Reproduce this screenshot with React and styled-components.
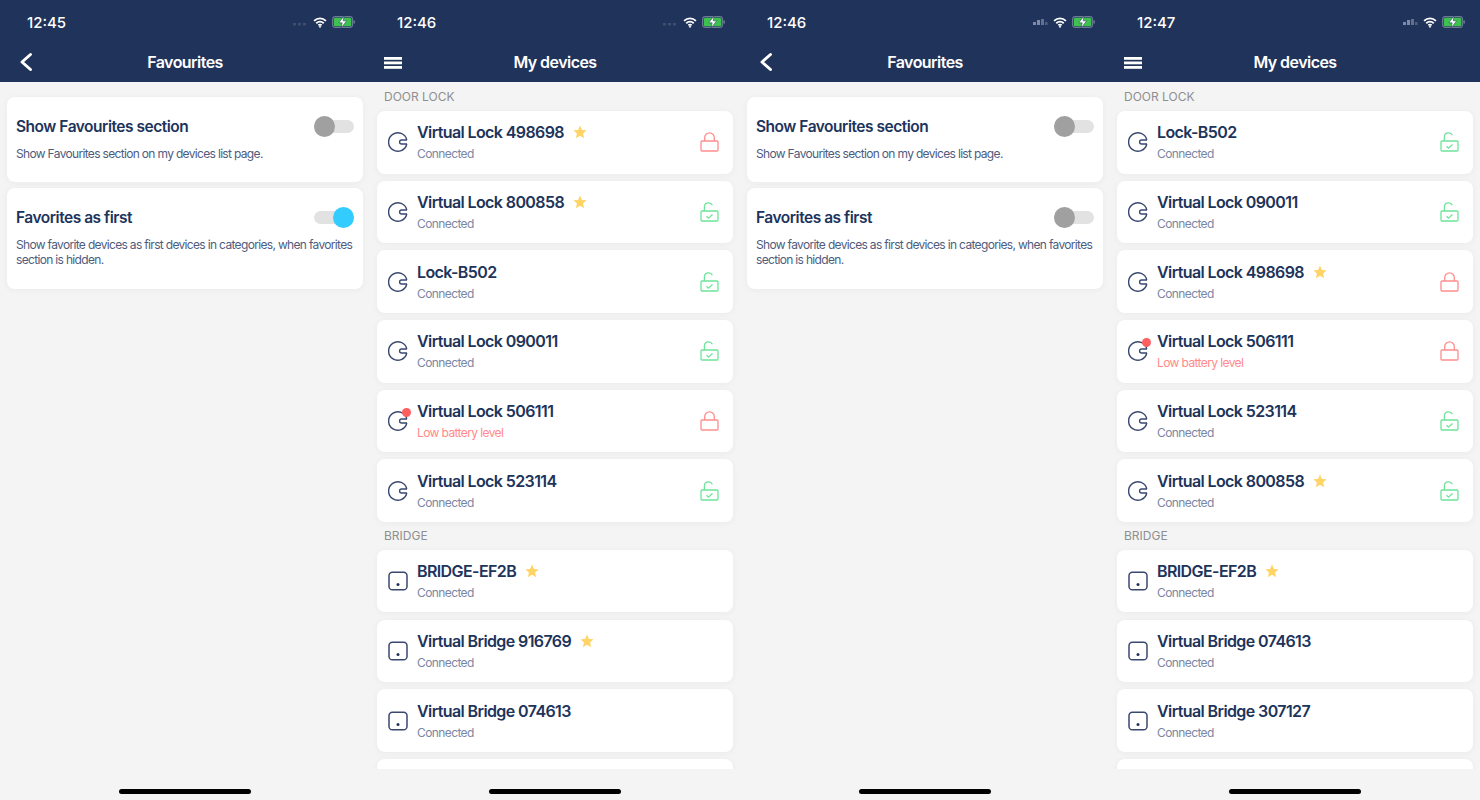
import React from "react";
import styled, { createGlobalStyle } from "styled-components";

const GlobalStyle = createGlobalStyle`
  html, body { margin: 0; padding: 0; background: #f4f4f4; }
  body { font-family: Inter, "Liberation Sans", sans-serif; -webkit-font-smoothing: antialiased; }
`;

const Page = styled.div`
  display: grid;
  grid-template-columns: repeat(4, 370px);
  width: 1480px;
  height: 800px;
  overflow: hidden;
`;

const Phone = styled.div`
  display: flex;
  flex-direction: column;
  height: 800px;
  background: #f4f4f4;
`;

const Top = styled.div`
  height: 82px;
  background: #20335a;
  color: #fff;
  flex: none;
`;

const StatusBar = styled.div`
  display: flex;
  align-items: center;
  justify-content: space-between;
  height: 44px;
  padding: 0 15px 0 27px;
`;

const Time = styled.span`
  font-size: 15px;
  font-weight: 500;
`;

const StatusIcons = styled.div`
  display: flex;
  align-items: center;
  gap: 5px;
`;

const NavBar = styled.div`
  position: relative;
  display: flex;
  align-items: center;
  justify-content: center;
  height: 36px;
`;

const NavIcon = styled.div`
  position: absolute;
  left: ${(p) => p.$left}px;
  top: 8px;
  display: flex;
`;

const Title = styled.div`
  font-size: 16px;
  font-weight: 600;
  letter-spacing: -0.55px;
`;

const Content = styled.div`
  flex: 1;
  min-height: 0;
  overflow: hidden;
  padding: 0 7px;
  display: flex;
  flex-direction: column;
`;

const SettingsCard = styled.div`
  background: #fff;
  border-radius: 8px;
  box-shadow: 0 1px 6px rgba(32, 51, 90, 0.05);
  padding: 15px 9px 0;
  box-sizing: border-box;
  height: ${(p) => p.$height}px;
  margin-top: ${(p) => p.$top}px;
  flex: none;
`;

const SettingsHead = styled.div`
  display: flex;
  align-items: center;
  justify-content: space-between;
  height: 28px;
`;

const SettingsTitle = styled.div`
  font-size: 15.5px;
  font-weight: 600;
  letter-spacing: -0.48px;
  color: #20335a;
`;

const SettingsText = styled.div`
  font-size: 12px;
  line-height: 15px;
  letter-spacing: -0.67px;
  color: #4e5c7d;
  margin-top: 6px;
`;

const Toggle = styled.div`
  position: relative;
  width: 40px;
  height: 13px;
  border-radius: 7px;
  background: #e2e2e2;
`;

const Knob = styled.div`
  position: absolute;
  top: -4px;
  ${(p) => (p.$on ? "right: 0;" : "left: 0;")}
  width: 21px;
  height: 21px;
  border-radius: 50%;
  background: ${(p) => (p.$on ? "#32ccff" : "#a0a0a0")};
`;

const SectionLabel = styled.div`
  flex: none;
  height: ${(p) => p.$height}px;
  padding: ${(p) => p.$pad}px 0 0 7px;
  box-sizing: border-box;
  font-size: 12px;
  line-height: 14px;
  color: #8f8f8f;
`;

const List = styled.div`
  display: flex;
  flex-direction: column;
  gap: 7.2px;
`;

const Device = styled.div`
  flex: none;
  height: 62.5px;
  background: #fff;
  border-radius: 8px;
  box-shadow: 0 1px 6px rgba(32, 51, 90, 0.05);
  display: flex;
  align-items: center;
  padding: 0 14px 0 11px;
`;

const DeviceIcon = styled.div`
  position: relative;
  width: 20px;
  height: 20px;
  margin-right: 9px;
  display: flex;
`;

const Alert = styled.span`
  position: absolute;
  top: -3px;
  right: -3px;
  width: 9px;
  height: 9px;
  border-radius: 50%;
  background: #ff5f5f;
`;

const DeviceInfo = styled.div`
  flex: 1;
  display: flex;
  flex-direction: column;
  gap: 4px;
  margin-top: -1px;
`;

const NameRow = styled.div`
  display: flex;
  align-items: center;
  gap: 9px;
  height: 20px;
`;

const Name = styled.div`
  font-size: 16px;
  font-weight: 600;
  letter-spacing: -0.6px;
  color: #20335a;
`;

const Sub = styled.div`
  font-size: 12px;
  line-height: 15px;
  letter-spacing: -0.6px;
  color: ${(p) => (p.$low ? "#ff8a8a" : "#7b86a3")};
`;

const Foot = styled.div`
  flex: none;
  height: 31px;
  display: flex;
  justify-content: center;
  padding-top: 20px;
  box-sizing: border-box;
`;

const HomeBar = styled.div`
  width: 132px;
  height: 5px;
  border-radius: 3px;
  background: #000;
`;

const Signal = ({ strong }) => (
  <svg width="16" height="8" viewBox="0 0 16 8">
    {strong ? (
      <g fill="#7f8ba5">
        <rect x="1" y="4" width="3" height="3" />
        <rect x="5" y="2" width="3" height="5" />
        <rect x="9" y="1" width="3" height="6" opacity=".7" />
        <rect x="13" y="4" width="2.5" height="3" opacity=".5" />
      </g>
    ) : (
      <g fill="#3f4d6e">
        <rect x="1" y="5" width="3" height="2.5" />
        <rect x="6" y="5" width="3" height="2.5" />
        <rect x="11" y="5" width="3" height="2.5" />
      </g>
    )}
  </svg>
);

const Wifi = () => (
  <svg width="14" height="11" viewBox="0 0 15 12" fill="none" stroke="#fff" strokeWidth="1.9">
    <path d="M1 4.2C4.8.6 10.2.6 14 4.2" />
    <path d="M3.4 6.8c2.4-2.2 5.8-2.2 8.2 0" />
    <path d="M5.7 9c1.1-.9 2.5-.9 3.6 0" />
    <circle cx="7.5" cy="10.6" r=".7" fill="#fff" strokeWidth="1" />
  </svg>
);

const Battery = () => (
  <svg width="23" height="12" viewBox="0 0 23 12">
    <rect x=".6" y=".6" width="20" height="10.8" rx="2.8" fill="none" stroke="#6b7a96" strokeWidth="1.1" />
    <rect x="1.8" y="1.8" width="17.6" height="8.4" rx="1.5" fill="#3ec24f" />
    <rect x="21.4" y="4.2" width="1.5" height="3.6" rx=".7" fill="#6b7a96" />
    <path d="M12 0 6.8 6.8h3.4L9.2 12l5.4-7.2h-3.4z" fill="#fff" stroke="#20335a" strokeWidth=".5" />
  </svg>
);

const Back = () => (
  <svg width="14" height="20" viewBox="0 0 14 20" fill="none" stroke="#fff" strokeWidth="3" strokeLinecap="round" strokeLinejoin="round">
    <path d="M11.5 2.5 3 10l8.5 7.5" />
  </svg>
);

const Burger = () => (
  <svg width="19" height="18" viewBox="0 0 19 18" fill="#fff">
    <rect y="5" width="18" height="2.8" />
    <rect y="9.5" width="18" height="2.8" />
    <rect y="14" width="18" height="2.8" />
  </svg>
);

const LockGlyph = () => (
  <svg width="20" height="20" viewBox="0 0 20 20" fill="none" stroke="#39486e" strokeWidth="1.4">
    <path d="M18.8 12A9.2 9.2 0 1 1 18.8 8" />
    <path d="M19 8h-5.4a2 2 0 0 0 0 4H19" />
  </svg>
);

const BridgeGlyph = () => (
  <svg width="20" height="20" viewBox="0 0 20 20" fill="none">
    <rect x="1" y="1.3" width="18" height="17.5" rx="3.4" stroke="#39486e" strokeWidth="1.5" />
    <circle cx="10" cy="13.4" r="1.5" fill="#20335a" />
  </svg>
);

const Star = () => (
  <svg width="14" height="14" viewBox="0 0 24 24" fill="#ffd467">
    <path d="M12 1l3.3 7.4 8 .8-6 5.4 1.7 7.900L12 18.400 5 22.500l1.700-7.900-6-5.400 8-.8z" />
  </svg>
);

const Closed = () => (
  <svg width="19" height="20" viewBox="0 0 19 20" fill="none" stroke="#ff8d8d" strokeWidth="1.3">
    <rect x="1" y="9" width="17" height="10" rx="1" />
    <path d="M4.700 9V5.700a4.800 4.800 0 0 1 9.600 0V9" />
  </svg>
);

const Open = () => (
  <svg width="19" height="20" viewBox="0 0 19 20" fill="none" stroke="#6fe39b" strokeWidth="1.3">
    <rect x="1" y="9" width="17" height="10" rx="1" />
    <path d="M4.400 9V5a4.200 4.200 0 0 1 8-1.700" />
    <path d="M6.500 14.200l2 2 4-3.600" />
  </svg>
);

const Dev = ({ name, star, locked, open, low, bridge }) => (
  <Device>
    <DeviceIcon>
      {bridge ? <BridgeGlyph /> : <LockGlyph />}
      {low && <Alert />}
    </DeviceIcon>
    <DeviceInfo>
      <NameRow>
        <Name>{name}</Name>
        {star && <Star />}
      </NameRow>
      <Sub $low={low}>{low ? "Low battery level" : "Connected"}</Sub>
    </DeviceInfo>
    {locked && <Closed />}
    {open && <Open />}
  </Device>
);

const Header = ({ time, title, back, strong }) => (
  <Top>
    <StatusBar>
      <Time>{time}</Time>
      <StatusIcons>
        <Signal strong={strong} />
        <Wifi />
        <Battery />
      </StatusIcons>
    </StatusBar>
    <NavBar>
      <NavIcon $left={back ? 19 : 14}>{back ? <Back /> : <Burger />}</NavIcon>
      <Title>{title}</Title>
    </NavBar>
  </Top>
);

const Favourites = ({ time, on, strong }) => (
  <Phone>
    <Header time={time} title="Favourites" back strong={strong} />
    <Content>
      <SettingsCard $top={15} $height={85}>
        <SettingsHead>
          <SettingsTitle>Show Favourites section</SettingsTitle>
          <Toggle><Knob /></Toggle>
        </SettingsHead>
        <SettingsText>Show Favourites section on my devices list page.</SettingsText>
      </SettingsCard>
      <SettingsCard $top={6} $height={101}>
        <SettingsHead>
          <SettingsTitle>Favorites as first</SettingsTitle>
          <Toggle><Knob $on={on} /></Toggle>
        </SettingsHead>
        <SettingsText>Show favorite devices as first devices in categories, when favorites section is hidden.</SettingsText>
      </SettingsCard>
    </Content>
    <Foot><HomeBar /></Foot>
  </Phone>
);

const Devices = ({ time, locks, bridges, strong }) => (
  <Phone>
    <Header time={time} title="My devices" strong={strong} />
    <Content>
      <SectionLabel $height={29} $pad={8}>DOOR LOCK</SectionLabel>
      <List>
        {locks.map((d) => <Dev key={d.name} {...d} />)}
      </List>
      <SectionLabel $height={28} $pad={7}>BRIDGE</SectionLabel>
      <List>
        {bridges.map((d) => <Dev key={d.name} bridge {...d} />)}
        <Device />
      </List>
    </Content>
    <Foot><HomeBar /></Foot>
  </Phone>
);

const locksA = [
  { name: "Virtual Lock 498698", star: true, locked: true },
  { name: "Virtual Lock 800858", star: true, open: true },
  { name: "Lock-B502", open: true },
  { name: "Virtual Lock 090011", open: true },
  { name: "Virtual Lock 506111", locked: true, low: true },
  { name: "Virtual Lock 523114", open: true },
];

const locksB = [
  { name: "Lock-B502", open: true },
  { name: "Virtual Lock 090011", open: true },
  { name: "Virtual Lock 498698", star: true, locked: true },
  { name: "Virtual Lock 506111", locked: true, low: true },
  { name: "Virtual Lock 523114", open: true },
  { name: "Virtual Lock 800858", star: true, open: true },
];

const bridgesA = [
  { name: "BRIDGE-EF2B", star: true },
  { name: "Virtual Bridge 916769", star: true },
  { name: "Virtual Bridge 074613" },
];

const bridgesB = [
  { name: "BRIDGE-EF2B", star: true },
  { name: "Virtual Bridge 074613" },
  { name: "Virtual Bridge 307127" },
];

export default function App() {
  return (
    <>
      <GlobalStyle />
      <Page>
        <Favourites time="12:45" on />
        <Devices time="12:46" locks={locksA} bridges={bridgesA} />
        <Favourites time="12:46" strong />
        <Devices time="12:47" locks={locksB} bridges={bridgesB} strong />
      </Page>
    </>
  );
}
